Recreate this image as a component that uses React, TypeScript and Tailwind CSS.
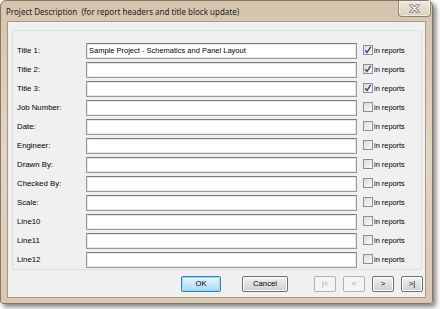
import React from 'react';

const rows: { label: string; value: string; checked: boolean }[] = [
  { label: 'Title 1:', value: 'Sample Project - Schematics and Panel Layout', checked: true },
  { label: 'Title 2:', value: '', checked: true },
  { label: 'Title 3:', value: '', checked: true },
  { label: 'Job Number:', value: '', checked: false },
  { label: 'Date:', value: '', checked: false },
  { label: 'Engineer:', value: '', checked: false },
  { label: 'Drawn By:', value: '', checked: false },
  { label: 'Checked By:', value: '', checked: false },
  { label: 'Scale:', value: '', checked: false },
  { label: 'Line10', value: '', checked: false },
  { label: 'Line11', value: '', checked: false },
  { label: 'Line12', value: '', checked: false },
];

const CheckBox = ({ checked }: { checked: boolean }) => (
  <div className="w-[10px] h-[10px] border border-[#8e8f8f] bg-gradient-to-br from-[#dcdcdc] to-[#fafafa] flex items-center justify-center">
    {checked && (
      <svg width="8" height="8" viewBox="0 0 8 8">
        <path d="M1.2 4.2 L3 6.4 L6.8 0.8" fill="none" stroke="#2a4fa0" strokeWidth="1.5" />
      </svg>
    )}
  </div>
);

const Btn = ({ children, w, disabled, primary }: { children: React.ReactNode; w: string; disabled?: boolean; primary?: boolean }) => (
  <div
    className={`${w} h-[16px] rounded-[2px] border flex items-center justify-center text-[7.7px] ${
      primary
        ? 'border-[#3c7fb1] bg-gradient-to-b from-[#eaf6fd] to-[#a7d9f5] shadow-[inset_0_0_0_1px_#8fdcff]'
        : disabled
        ? 'border-[#adb2b5] bg-[#f4f4f4] text-[#a0a0a0]'
        : 'border-[#707070] bg-gradient-to-b from-[#f2f2f2] to-[#cfcfcf] shadow-[inset_0_0_0_1px_#fcfcfc]'
    }`}
  >
    {children}
  </div>
);

export default function App() {
  return (
    <div className="w-[440px] h-[309px] bg-white" style={{ fontFamily: '"Liberation Sans", Arial, sans-serif' }}>
      <div className="w-[433px] h-[304px] flex flex-col border border-[#857868] rounded-t-[6px] rounded-b-[3px] bg-gradient-to-b from-[#d6c5ad] via-[#e2d5c2] to-[#d9c9b3] shadow-[3px_3px_5px_rgba(0,0,0,0.5)]">
        <div className="h-[20px] flex items-start justify-between">
          <div className="pl-[5px] pt-[5px] text-[8px] text-[#1c1c1c] whitespace-pre" style={{ fontFamily: '"Noto Sans", "Liberation Sans", sans-serif' }}>
            {'Project Description  (for report headers and title block update)'}
          </div>
          <div className="w-[33px] h-[16px] mr-[1px] rounded-b-[4px] border border-t-0 border-[#8f8373] bg-gradient-to-b from-[#f0e8dc] to-[#ddd0bc] flex items-center justify-center shadow-[inset_0_0_0_1px_rgba(255,255,255,0.5)]">
            <svg width="11" height="9" viewBox="0 0 11 9">
              <path d="M2 1 L9 8 M9 1 L2 8" stroke="#6a6a6a" strokeWidth="3" strokeLinecap="round" />
              <path d="M2 1 L9 8 M9 1 L2 8" stroke="#ffffff" strokeWidth="1.4" strokeLinecap="round" />
            </svg>
          </div>
        </div>
        <div className="flex-1 mx-[6px] mb-[5px] bg-[#f0f0f0] border border-[#a49a8c] flex flex-col">
          <div className="mt-[8px] ml-[4px] w-[410px] h-[240px] border border-[#d5dfe5] rounded-[2px] pt-[10px] pl-[4px] flex flex-col">
            {rows.map((r) => (
              <div key={r.label} className="h-[19px] flex items-center">
                <div className="w-[69px] text-[7.8px] text-[#000]">{r.label}</div>
                <div className="w-[271px] h-[16px] border border-[#9a9a9a] border-t-[#7a7a7a] bg-white shadow-[inset_0_0_0_1px_#e3e9ef] flex items-center pl-[2px] text-[7.5px] text-[#000]">
                  {r.value}
                </div>
                <div className="ml-[6px] flex items-center gap-[1px]">
                  <CheckBox checked={r.checked} />
                  <span className="text-[7.4px] text-[#000]">in reports</span>
                </div>
              </div>
            ))}
          </div>
          <div className="mt-[6px] pr-[2px] flex items-center justify-end">
            <Btn w="w-[40px]" primary>OK</Btn>
            <div className="ml-[21px]">
              <Btn w="w-[46px]">Cancel</Btn>
            </div>
            <div className="ml-[26px] flex gap-[7px]">
              <Btn w="w-[22px]" disabled>|&lt;</Btn>
              <Btn w="w-[22px]" disabled>&lt;</Btn>
              <Btn w="w-[22px]">&gt;</Btn>
              <Btn w="w-[22px]">&gt;|</Btn>
            </div>
          </div>
        </div>
      </div>
    </div>
  );
}
